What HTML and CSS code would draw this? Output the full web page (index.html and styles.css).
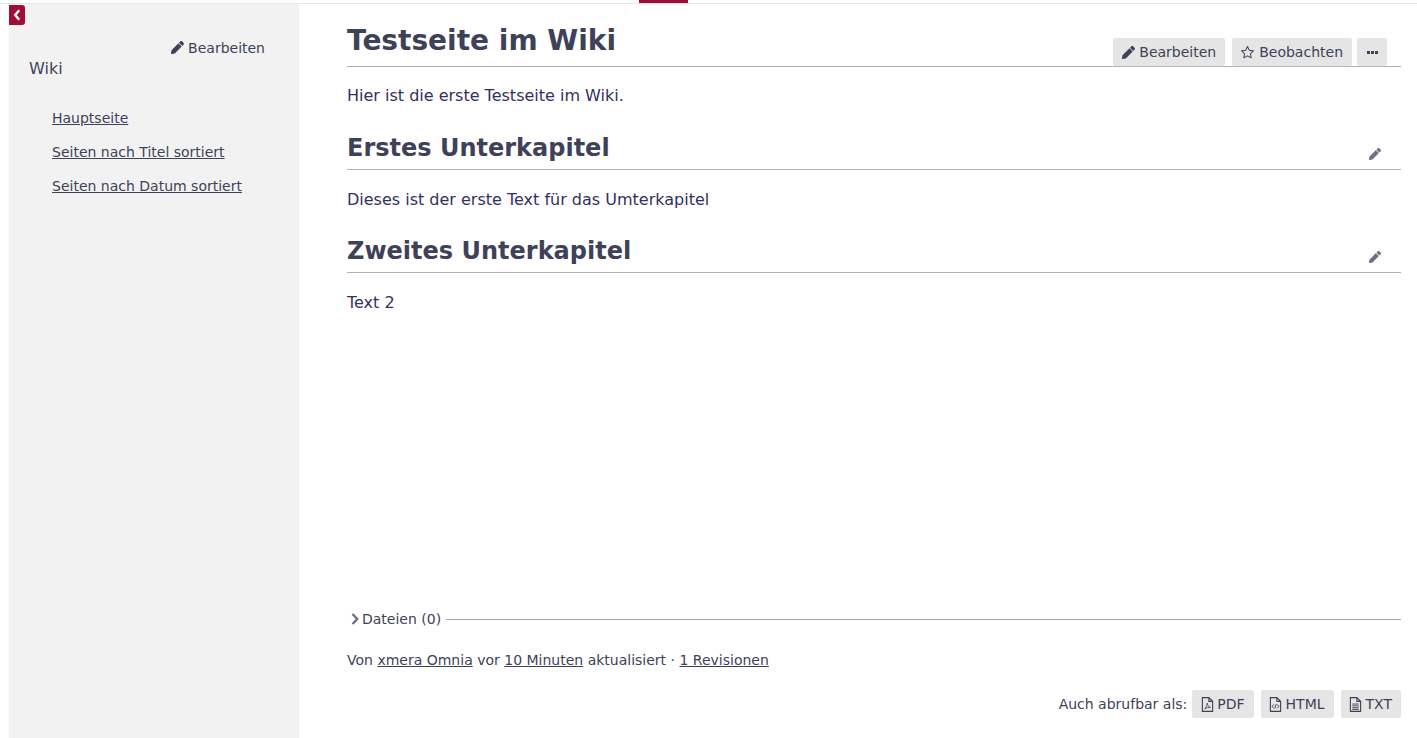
FILE: index.html
```html
<!DOCTYPE html>
<html lang="de">
<head>
    <meta charset="UTF-8">
    <title>Testseite im Wiki</title>
    <link rel="stylesheet" href="styles.css">
</head>
<body>
    <svg class="icon-defs" width="0" height="0">
        <symbol id="pencil" viewBox="0 0 512 512">
            <path d="M497.900 142.100l-46.100 46.100c-4.700 4.700-12.300 4.700-17 0l-111-111c-4.700-4.700-4.700-12.300 0-17l46.100-46.100c18.700-18.700 49.100-18.700 67.900 0l60.100 60.100c18.800 18.700 18.800 49.100 0 67.900zM284.200 99.800L21.600 362.400.4 483.900c-2.900 16.400 11.400 30.600 27.800 27.800l121.500-21.300 262.600-262.600c4.700-4.700 4.700-12.300 0-17l-111-111c-4.800-4.700-12.400-4.700-17.100 0z"/>
        </symbol>
        <symbol id="file" viewBox="0 0 14 16">
            <path d="M1.500.6h7l4 4v10.800h-11z M8.500.6v4h4" fill="none" stroke="currentColor" stroke-width="1.200"/>
        </symbol>
    </svg>

    <div class="topbar"><span class="topbar-tab"></span></div>

    <div class="layout">
        <aside class="sidebar">
            <a class="sidebar-toggle" href="#">
                <svg width="8" height="12" viewBox="0 0 8 12"><path d="M6.200 1.200L2.200 6l4 4.800" fill="none" stroke="#fff" stroke-width="2.400"/></svg>
            </a>
            <div class="sidebar-edit">
                <svg class="icon"><use href="#pencil"/></svg>
                <span>Bearbeiten</span>
            </div>
            <h3 class="sidebar-title">Wiki</h3>
            <ul class="sidebar-links">
                <li><a href="#">Hauptseite</a></li>
                <li><a href="#">Seiten nach Titel sortiert</a></li>
                <li><a href="#">Seiten nach Datum sortiert</a></li>
            </ul>
        </aside>

        <main class="content">
            <div class="page-head">
                <h1>Testseite im Wiki</h1>
                <div class="actions">
                    <a class="btn btn-edit" href="#"><svg class="icon"><use href="#pencil"/></svg>Bearbeiten</a>
                    <a class="btn" href="#">
                        <svg class="icon" viewBox="1 1 14 14"><path d="M8 1.600l1.950 4.050 4.450.6-3.250 3.100.8 4.400L8 11.600l-3.950 2.150.8-4.400L1.600 6.250l4.450-.6z" fill="none" stroke="currentColor" stroke-width="1.100" stroke-linejoin="round"/></svg>Beobachten
                    </a>
                    <a class="btn btn-more" href="#">
                        <svg width="11" height="3" viewBox="0 0 11 3"><path d="M0 0h3v3H0zM4 0h3v3H4zM8 0h3v3H8z" fill="currentColor"/></svg>
                    </a>
                </div>
            </div>
            <p class="wiki-text wiki-intro">Hier ist die erste Testseite im Wiki.</p>

            <div class="section-head">
                <h2>Erstes Unterkapitel</h2>
                <svg class="icon edit-icon"><use href="#pencil"/></svg>
            </div>
            <p class="wiki-text">Dieses ist der erste Text für das Umterkapitel</p>

            <div class="section-head">
                <h2>Zweites Unterkapitel</h2>
                <svg class="icon edit-icon"><use href="#pencil"/></svg>
            </div>
            <p class="wiki-text last">Text 2</p>

            <div class="files">
                <svg class="files-arrow" width="8" height="12" viewBox="0 0 8 12"><path d="M1.500 1L6.200 6l-4.700 5" fill="none" stroke="currentColor" stroke-width="2.400"/></svg>
                <span>Dateien (0)</span>
                <span class="files-line"></span>
            </div>

            <p class="updated">Von <a href="#">xmera Omnia</a> vor <a href="#">10 Minuten</a> aktualisiert · <a href="#">1 Revisionen</a></p>

            <div class="formats">
                <span>Auch abrufbar als:</span>
                <a class="btn" href="#">
                    <svg class="icon-file" viewBox="0 0 14 16"><use href="#file"/><path d="M4 12.500c1.500-1 2.500-3.500 2.700-6 .4 2.500 1.500 4 3.500 4.500-2 0-4.500.5-6.200 1.500z" fill="none" stroke="currentColor" stroke-width=".9"/></svg>PDF
                </a>
                <a class="btn" href="#">
                    <svg class="icon-file" viewBox="0 0 14 16"><use href="#file"/><path d="M5 8l-1.500 2L5 12M9 8l1.500 2L9 12M7.700 7.500l-1.400 5" fill="none" stroke="currentColor" stroke-width="1"/></svg>HTML
                </a>
                <a class="btn" href="#">
                    <svg class="icon-file" viewBox="0 0 14 16"><use href="#file"/><path d="M3.500 7.500h7M3.500 9.500h7M3.500 11.500h7M3.500 13.300h7" fill="none" stroke="currentColor" stroke-width="1"/></svg>TXT
                </a>
            </div>
        </main>
    </div>
</body>
</html>
```

FILE: styles.css
```css
* {
    box-sizing: border-box;
}
body {
    margin: 0;
    font-family: "DejaVu Sans", sans-serif;
    font-size: 14px;
    color: #3e4259;
    background-color: #fff;
    overflow: hidden;
}
a {
    color: inherit;
}
.icon-defs {
    position: absolute;
}
.icon {
    width: 13px;
    height: 13px;
    fill: currentColor;
    flex: none;
}
.topbar {
    position: relative;
    height: 4px;
    border-bottom: 1px solid #e6e6e6;
}
.topbar-tab {
    position: absolute;
    left: 639px;
    top: 0;
    width: 49px;
    height: 3px;
    background-color: #a00e35;
}
.layout {
    display: flex;
    height: 734px;
    padding-left: 9px;
}
.sidebar {
    position: relative;
    width: 290px;
    flex: none;
    padding: 35px 34px 0 20px;
    background-color: #f2f2f2;
}
.sidebar-toggle {
    position: absolute;
    left: 0;
    top: 1px;
    display: flex;
    justify-content: center;
    align-items: center;
    width: 16px;
    height: 20px;
    background-color: #a00e35;
    border-radius: 0 3px 3px 0;
}
.sidebar-edit {
    display: flex;
    justify-content: flex-end;
    align-items: center;
    gap: 4px;
    height: 17px;
}
.sidebar-title {
    margin: 3px 0 0;
    font-size: 16px;
    font-weight: normal;
    line-height: 19px;
}
.sidebar-links {
    list-style: none;
    margin: 0;
    padding: 32px 0 0 23px;
}
.sidebar-links li {
    height: 34px;
    font-size: 14px;
    line-height: 17px;
}
.content {
    flex: 1;
    display: flex;
    flex-direction: column;
    margin: 0 16px 0 48px;
    min-width: 0;
}
.page-head {
    display: flex;
    justify-content: space-between;
    align-items: flex-end;
    height: 63px;
    border-bottom: 1px solid #b3b3b3;
}
h1 {
    align-self: flex-start;
    margin: 19px 0 0;
    font-size: 28px;
    line-height: 36px;
    font-weight: bold;
}
.actions {
    display: flex;
    gap: 7px;
    margin-right: 14px;
}
.btn {
    display: flex;
    align-items: center;
    gap: 5px;
    height: 28px;
    padding: 0 9px;
    background-color: #e5e5e5;
    border-radius: 2px;
    text-decoration: none;
}
.btn-edit {
    gap: 4px;
}
.btn-more {
    width: 30px;
    justify-content: center;
    margin-left: -2px;
    padding: 0;
}
.wiki-text {
    margin: 20px 0 0;
    font-size: 16px;
    line-height: 20px;
    color: #332f5e;
}
.wiki-intro {
    margin: 19px 0 1px;
}
.section-head {
    display: flex;
    justify-content: space-between;
    align-items: flex-end;
    height: 36px;
    margin-top: 27px;
    border-bottom: 1px solid #b3b3b3;
}
h2 {
    align-self: flex-start;
    margin: 0;
    font-size: 24px;
    line-height: 28px;
    font-weight: bold;
}
.edit-icon {
    width: 12px;
    height: 12px;
    margin: 0 20px 9px 0;
    color: #6f7083;
}
.last {
    flex: 1;
}
.files {
    display: flex;
    align-items: center;
    gap: 5px;
    height: 18px;
    margin-left: 4px;
}
.files-arrow {
    color: #6f7083;
    margin-right: -2px;
}
.files-line {
    flex: 1;
    height: 1px;
    background-color: #a6a6a6;
}
.updated {
    margin: 24px 0 0;
    line-height: 17px;
}
.formats {
    display: flex;
    justify-content: flex-end;
    align-items: center;
    gap: 7px;
    margin: 21px 0 20px;
}
.formats span {
    margin-right: -2px;
}
.formats .btn {
    padding: 0 9px 0 8.500px;
    gap: 3.500px;
}
.icon-file {
    width: 13px;
    height: 15px;
}
```
